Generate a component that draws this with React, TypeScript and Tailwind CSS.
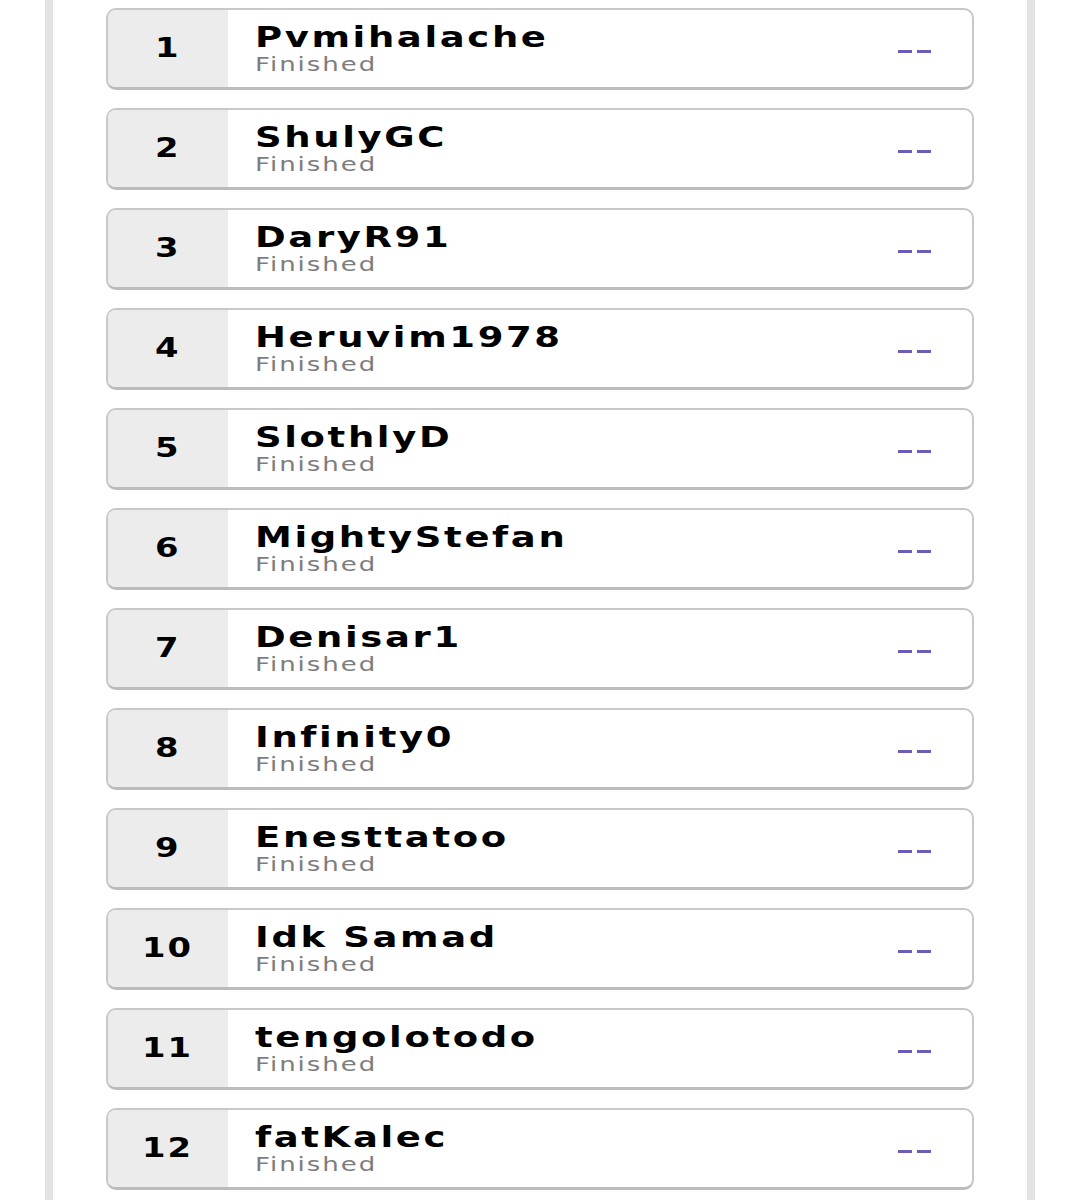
import React from "react";

// Finished players list
const players = [
  "Pvmihalache",
  "ShulyGC",
  "DaryR91",
  "Heruvim1978",
  "SlothlyD",
  "MightyStefan",
  "Denisar1",
  "Infinity0",
  "Enesttatoo",
  "Idk Samad",
  "tengolotodo",
  "fatKalec",
];

const App = () => {
  return (
    <div className="min-h-[1200px] bg-white" style={{ fontFamily: "'DejaVu Sans', sans-serif" }}>
      <div className="ml-[45px] w-[990px] min-h-[1200px] border-x-8 border-[#e3e3e3] px-[53px] pt-[8px] flex flex-col gap-[18px]">
        {players.map((name, i) => (
          <div
            key={name}
            className="flex h-[82px] rounded-[10px] border-2 border-b-[3px] border-[#c8c8c8] border-b-[#bcbcbc] overflow-hidden bg-white"
          >
            <div className="w-[120px] shrink-0 bg-[#ececec] flex items-center justify-center">
              <span className="text-[26px] font-bold text-black tracking-[1.5px] scale-x-[1.3]">{i + 1}</span>
            </div>
            <div className="flex-1 flex items-center pl-[27px] pr-[41px]">
              <div className="flex-1 flex flex-col items-start">
                <div className="text-[28px] leading-[30px] font-bold text-black tracking-[2px] scale-x-[1.32] origin-left whitespace-nowrap">
                  {name}
                </div>
                <div className="text-[20px] leading-[22px] text-[#7d7d7d] tracking-[1.5px] scale-x-[1.3] origin-left">
                  Finished
                </div>
              </div>
              <div className="flex gap-[5px] pt-[5px]">
                <span className="w-[14px] h-[3px] bg-[#6c5db6]" />
                <span className="w-[14px] h-[3px] bg-[#6c5db6]" />
              </div>
            </div>
          </div>
        ))}
      </div>
    </div>
  );
};

export default App;
